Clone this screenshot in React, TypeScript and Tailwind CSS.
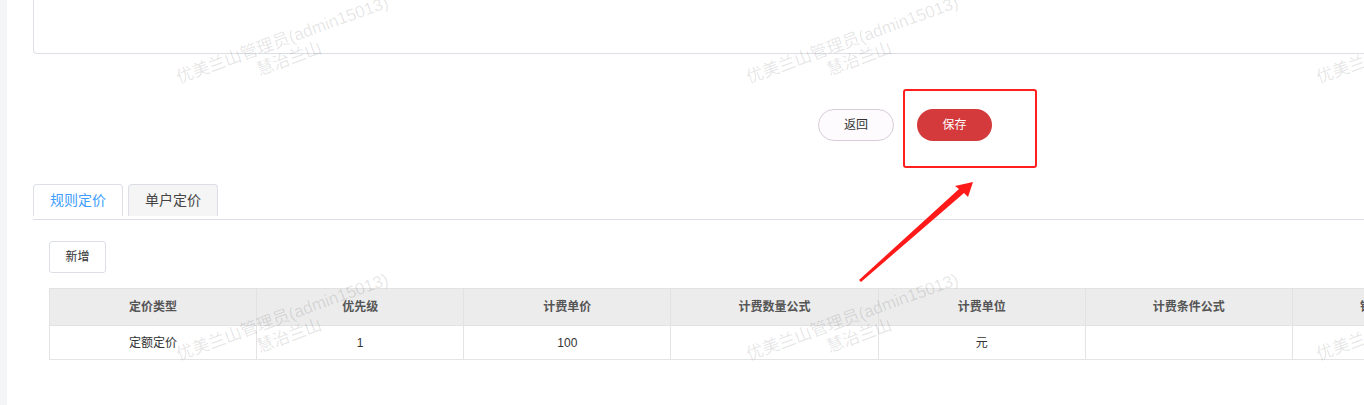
import React from "react";

const FONT = '"Liberation Sans", "Noto Sans CJK SC", sans-serif';

const columns = ["定价类型", "优先级", "计费单价", "计费数量公式", "计费单位", "计费条件公式", "销售计费规则"];
const row = ["定额定价", "1", "100", "", "元", "", ""];

function Watermarks() {
  const items: { x: number; y: number }[] = [];
  for (let j = 0; j < 2; j++) {
    for (let i = 0; i < 3; i++) {
      items.push({ x: 286 + 570 * i, y: 50 + 277 * j });
    }
  }
  return (
    <div className="pointer-events-none absolute inset-0 overflow-hidden">
      {items.map((p, k) => (
        <div
          key={k}
          className="absolute flex -translate-x-1/2 -translate-y-1/2 rotate-[-20deg] flex-col items-center whitespace-nowrap text-[17px] leading-[20px] text-[rgba(0,0,0,0.11)]"
          style={{ left: p.x, top: p.y }}
        >
          <span>优美兰山管理员(admin15013)</span>
          <span>慧治兰山</span>
        </div>
      ))}
    </div>
  );
}

export default function App() {
  return (
    <div className="relative h-[405px] w-[1364px] overflow-hidden bg-white" style={{ fontFamily: FONT }}>
      <div className="flex h-full">
        <div className="w-[7px] shrink-0 bg-[#f4f5f7]" />
        <div className="w-[1800px] shrink-0 pl-[26px]">
          <div className="h-[54px] rounded-b-[4px] border border-t-0 border-[#dcdfe6]" />

          <div className="mt-[55px] flex gap-[23px] pl-[785px]">
            <button className="flex h-[32px] w-[76px] items-center justify-center rounded-full border border-[#d9cdd9] bg-[#fdfbfd] text-[12px] text-[#333]">
              返回
            </button>
            <button className="flex h-[32px] w-[75px] items-center justify-center rounded-full bg-[#d4393c] text-[12px] text-white">
              保存
            </button>
          </div>

          <div className="mt-[43px] flex items-end border-b border-[#dcdfe6] pb-[3px]">
            <div className="flex h-[32px] w-[90px] items-center justify-center rounded-t-[4px] border border-b-0 border-[#dcdfe6] bg-white text-[14px] text-[#409eff]">
              规则定价
            </div>
            <div className="ml-[5px] flex h-[32px] w-[90px] items-center justify-center rounded-t-[4px] border border-b-0 border-[#dcdfe6] bg-[#f5f5f5] text-[14px] text-[#444]">
              单户定价
            </div>
          </div>

          <div className="pl-[16px] pt-[21px]">
            <button className="flex h-[32px] w-[57px] items-center justify-center rounded-[3px] border border-[#dcdfe6] bg-white text-[12px] text-[#333]">
              新增
            </button>

            <table className="mt-[15px] w-[1451px] table-fixed border-collapse border border-[#dcdcdc]">
              <colgroup>
                {columns.map((c) => (
                  <col key={c} className="w-[207px]" />
                ))}
              </colgroup>
              <thead>
                <tr className="bg-[#ececec]">
                  {columns.map((c) => (
                    <th
                      key={c}
                      className="h-[37px] border border-[#e2e2e2] text-center text-[12px] font-bold text-[#555]"
                    >
                      {c}
                    </th>
                  ))}
                </tr>
              </thead>
              <tbody>
                <tr>
                  {row.map((v, i) => (
                    <td key={i} className="h-[34px] border border-[#e4e4e4] text-center text-[12px] text-[#333]">
                      {v}
                    </td>
                  ))}
                </tr>
              </tbody>
            </table>
          </div>
        </div>
      </div>

      <Watermarks />

      <div className="pointer-events-none absolute left-[903px] top-[89px] h-[79px] w-[134px] rounded-[3px] border-2 border-[#ff1f1f]" />

      <svg className="pointer-events-none absolute left-0 top-0" width="1364" height="405">
        <polygon
          points="859,280 959,189 955,186 973,182 968,197 964,193 861,282"
          fill="#ff1a1a"
        />
      </svg>
    </div>
  );
}
